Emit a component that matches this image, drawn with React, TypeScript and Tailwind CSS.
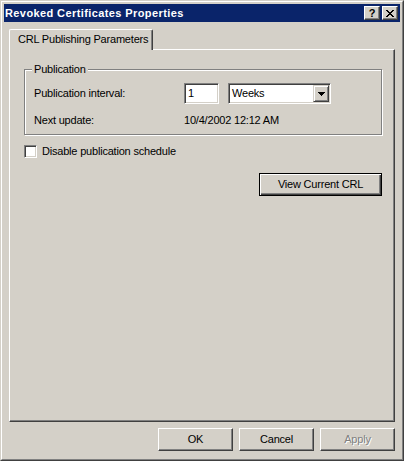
import React from "react";

const raised =
  "border border-t-white border-l-white border-r-[#404040] border-b-[#404040] shadow-[inset_-1px_-1px_0_#808080]";
const sunken =
  "border border-t-[#808080] border-l-[#808080] border-r-white border-b-white shadow-[inset_1px_1px_0_#404040,inset_-1px_-1px_0_#d4d0c8]";

function Btn({ label, disabled }: { label: string; disabled?: boolean }) {
  return (
    <div
      className={`w-[75px] h-[23px] flex items-center justify-center bg-[#d4d0c8] ${raised} ${
        disabled ? "text-[#808080] [text-shadow:1px_1px_0_#fff]" : "text-black"
      }`}
    >
      {label}
    </div>
  );
}

export default function App() {
  return (
    <div className="w-[404px] h-[461px] bg-[#d4d0c8] border border-t-[#d4d0c8] border-l-[#d4d0c8] border-r-[#404040] border-b-[#404040] font-['Liberation_Sans',Arial,sans-serif] text-[11px] leading-[13px] tracking-[-0.2px] text-black select-none whitespace-nowrap">
      <div className="h-full flex flex-col border border-t-white border-l-white border-r-[#808080] border-b-[#808080] p-[2px]">
        {/* Title bar */}
        <div className="h-[18px] shrink-0 bg-[#0a246a] flex items-center pl-[1px] pr-[2px]">
          <div className="flex-1 text-white font-bold text-[11px] leading-[13px] tracking-[0.4px]">
            Revoked Certificates Properties
          </div>
          <div
            className={`w-[16px] h-[14px] bg-[#d4d0c8] ${raised} flex items-center justify-center font-bold text-[11px] leading-[11px] text-black tracking-normal`}
          >
            ?
          </div>
          <div
            className={`ml-[2px] w-[16px] h-[14px] bg-[#d4d0c8] ${raised} flex items-center justify-center`}
          >
            <svg width="8" height="7" viewBox="0 0 8 7" shapeRendering="crispEdges">
              <path
                d="M0 0h2v1h-2zM6 0h2v1h-2zM1 1h2v1h-2zM5 1h2v1h-2zM2 2h4v1h-4zM3 3h2v1h-2zM2 4h4v1h-4zM1 5h2v1h-2zM5 5h2v1h-2zM0 6h2v1h-2zM6 6h2v1h-2z"
                fill="#000"
              />
            </svg>
          </div>
        </div>

        {/* Tabs + panel */}
        <div className="flex-1 flex flex-col pt-[7px] px-[5px]">
          <div className="relative z-10 -mb-[1px] w-[144px] h-[21px] bg-[#d4d0c8] border-l border-t border-r border-l-white border-t-white border-r-[#404040] shadow-[inset_-1px_0_0_#808080] rounded-t-[2px] pl-[8px] pt-[3px]">
            CRL Publishing Parameters
          </div>
          <div className="h-[373px] border border-t-white border-l-white border-r-[#404040] border-b-[#404040] shadow-[inset_-1px_-1px_0_#808080] pl-[14px] pt-[19px] flex flex-col">
            {/* Group box */}
            <div className="relative w-[358px] h-[66px] border border-[#808080] shadow-[inset_1px_1px_0_#fff,1px_1px_0_#fff] pt-[13px] pl-[9px]">
              <span className="absolute left-[7px] top-[-7px] px-[2px] bg-[#d4d0c8] leading-[13px]">
                Publication
              </span>
              <div className="flex items-center h-[21px]">
                <div className="w-[150px]">Publication interval:</div>
                <div className={`w-[35px] h-[21px] bg-white ${sunken} pl-[3px] flex items-center`}>
                  1
                </div>
                <div
                  className={`ml-[9px] w-[103px] h-[21px] bg-white ${sunken} flex items-stretch py-[1px] pr-[1px]`}
                >
                  <div className="flex-1 flex items-center pl-[3px]">Weeks</div>
                  <div className="w-[16px] bg-[#d4d0c8] border border-t-[#d4d0c8] border-l-[#d4d0c8] border-r-[#404040] border-b-[#404040] shadow-[inset_1px_1px_0_#fff,inset_-1px_-1px_0_#808080] flex items-center justify-center">
                    <svg width="7" height="4" viewBox="0 0 7 4" shapeRendering="crispEdges">
                      <path d="M0 0h7v1h-7zM1 1h5v1h-5zM2 2h3v1h-3zM3 3h1v1h-1z" fill="#000" />
                    </svg>
                  </div>
                </div>
              </div>
              <div className="mt-[10px] flex">
                <div className="w-[150px]">Next update:</div>
                <div>10/4/2002 12:12 AM</div>
              </div>
            </div>

            {/* Checkbox */}
            <div className="mt-[10px] flex items-center h-[13px]">
              <div className={`w-[13px] h-[13px] bg-white ${sunken}`} />
              <div className="ml-[5px]">Disable publication schedule</div>
            </div>

            {/* View button */}
            <div className="w-[358px] flex justify-end mt-[15px]">
              <div className="w-[123px] h-[23px] flex items-center justify-center border border-black shadow-[inset_1px_1px_0_#fff,inset_-1px_-1px_0_#404040,inset_-2px_-2px_0_#808080]">
                View Current CRL
              </div>
            </div>
          </div>
        </div>

        {/* Bottom buttons */}
        <div className="flex justify-end gap-[6px] pt-[6px] pb-[6px] pr-[5px]">
          <Btn label="OK" />
          <Btn label="Cancel" />
          <Btn label="Apply" disabled />
        </div>
      </div>
    </div>
  );
}
